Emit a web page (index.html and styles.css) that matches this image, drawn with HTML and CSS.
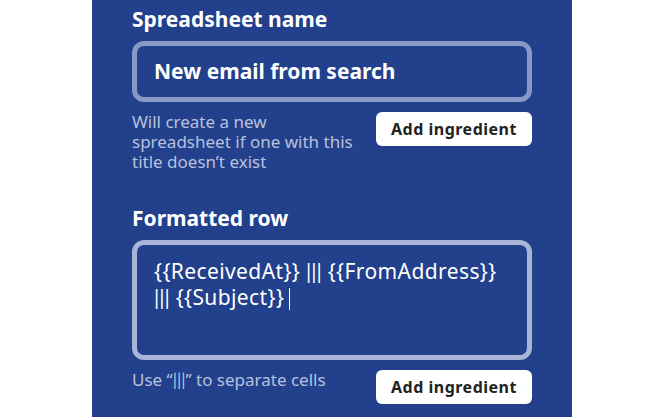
FILE: index.html
```html
<!DOCTYPE html>
<html>
<head>
  <link rel="stylesheet" href="styles.css">
</head>
<body class="body">
<div class="panel">
  <div class="field">
    <div class="field-label">Spreadsheet name</div>
    <div class="input input-line">New email from search</div>
    <div class="field-foot">
      <div class="hint">Will create a new spreadsheet if one with this title doesn&rsquo;t exist</div>
      <span class="btn">Add ingredient</span>
    </div>
  </div>
  <div class="field">
    <div class="field-label">Formatted row</div>
    <div class="input input-area focused">{{ReceivedAt}} <span class="sep">|||</span> {{FromAddress}} <span class="sep">|||</span> {{Subject}}<span class="caret"></span></div>
    <div class="field-foot">
      <div class="hint">Use &ldquo;<span class="sep">|||</span>&rdquo; to separate cells</div>
      <span class="btn">Add ingredient</span>
    </div>
  </div>
</div>
</body>
</html>
```

FILE: styles.css
```css
.body { margin:0; background:#FFFFFF; font-family:"Noto Sans",Lato,sans-serif; }
.panel { margin-left:92px; width:400px; height:417px; padding:6px 40px 0; background:#22408B; }
.field { margin-bottom:33px; }
.field-label { font-size:21px; line-height:26px; font-weight:bold; color:#FFFFFF; margin-bottom:9px; }
.input { border:5px solid #8A98C6; border-radius:12px; color:#FFFFFF; padding:0 17px; }
.input.focused { border-color:#A9B4D7; }
.input-line { height:51px; line-height:51px; font-size:21px; font-weight:bold; }
.input-area { height:97px; padding-top:13px; font-size:21px; line-height:25px; letter-spacing:0.4px; }
.sep { font-family:Lato,sans-serif; letter-spacing:0; }
.caret { display:inline-block; width:1px; height:22px; background:#FFFFFF; vertical-align:-5px; margin-left:5px; }
.field-foot { display:flex; justify-content:space-between; align-items:flex-start; margin-top:10px; }
.hint { width:226px; font-size:17px; line-height:20px; color:#B8C1DD; }
.btn { width:156px; height:34px; line-height:34px; text-align:center; background:#FFFFFF; color:#222222; border-radius:6px; font-size:16px; font-weight:bold; letter-spacing:0.5px; }
```
